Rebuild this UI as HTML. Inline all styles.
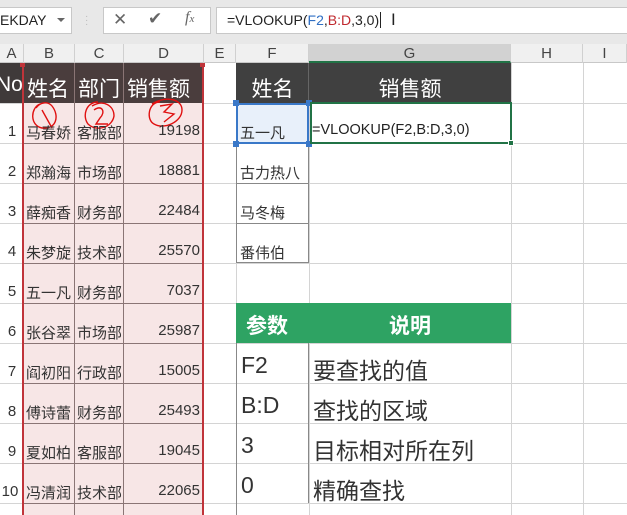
<!DOCTYPE html>
<html><head><meta charset="utf-8"><style>
*{margin:0;padding:0;box-sizing:border-box}
body{width:627px;height:515px;overflow:hidden;background:#fff;position:relative;font-family:"Liberation Sans","Noto Sans CJK SC",sans-serif;color:#333}
.a{position:absolute}
.hl{position:absolute;height:1px;background:#d4d4d4}
.vl{position:absolute;width:1px;background:#d4d4d4}
.ch{position:absolute;top:44px;height:19px;font-size:15px;color:#444;text-align:center;line-height:19px;border-right:1px solid #d0d0d0}
.t{position:absolute;font-size:15px;white-space:nowrap;color:#333}
</style></head><body>
<div class="a" style="left:0;top:0;width:627px;height:44px;background:#e8e8e8"></div>
<div class="a" style="left:0;top:7px;width:72px;height:27px;background:#fff;border:1px solid #c8c8c8;border-left:none;font-size:14px;line-height:25px;color:#222">EKDAY</div>
<div class="a" style="left:57px;top:18px;width:0;height:0;border-left:4px solid transparent;border-right:4px solid transparent;border-top:4px solid #666"></div>
<div class="a" style="left:85px;top:15px;color:#bbb;font-size:10px;line-height:4px">·<br>·<br>·</div>
<div class="a" style="left:103px;top:7px;width:108px;height:27px;background:#fff;border:1px solid #c8c8c8"></div>
<div class="a" style="left:113px;top:10px;font-size:17px;color:#666">✕</div>
<div class="a" style="left:148px;top:9px;font-size:17px;color:#666">✔</div>
<div class="a" style="left:185px;top:9px;font-size:16px;color:#666;font-style:italic;font-family:'Liberation Serif',serif">f<span style="font-size:11px">x</span></div>
<div class="a" style="left:216px;top:7px;width:411px;height:27px;background:#fff;border:1px solid #c8c8c8;border-right:none"></div>
<div class="a" style="left:227px;top:12px;font-size:14px;color:#222">=VLOOKUP(<span style="color:#2f6fc4">F2</span>,<span style="color:#c0292e">B:D</span>,3,0)<span style="display:inline-block;width:1px;height:16px;background:#222;vertical-align:-3px;margin-left:1px"></span></div>
<div class="a" style="left:391px;top:10px;font-size:17px;color:#222">I</div>
<div class="a" style="left:0;top:44px;width:627px;height:19px;background:#f0f0f0;border-bottom:1px solid #c8c8c8"></div>
<div class="ch" style="left:0;width:24px">A</div>
<div class="ch" style="left:24px;width:51px">B</div>
<div class="ch" style="left:75px;width:49px">C</div>
<div class="ch" style="left:124px;width:80px">D</div>
<div class="ch" style="left:204px;width:32px">E</div>
<div class="ch" style="left:236px;width:73px">F</div>
<div class="ch" style="left:309px;width:202px;background:#d2d2d2;border-bottom:2px solid #217346">G</div>
<div class="ch" style="left:511px;width:72px">H</div>
<div class="ch" style="left:583px;width:44px">I</div>
<div class="hl" style="left:0;top:143px;width:627px"></div>
<div class="hl" style="left:0;top:183px;width:627px"></div>
<div class="hl" style="left:0;top:223px;width:627px"></div>
<div class="hl" style="left:0;top:263px;width:627px"></div>
<div class="hl" style="left:0;top:303px;width:627px"></div>
<div class="hl" style="left:0;top:343px;width:627px"></div>
<div class="hl" style="left:0;top:383px;width:627px"></div>
<div class="hl" style="left:0;top:423px;width:627px"></div>
<div class="hl" style="left:0;top:463px;width:627px"></div>
<div class="hl" style="left:0;top:503px;width:627px"></div>
<div class="hl" style="left:0;top:103px;width:627px"></div>
<div class="vl" style="left:23px;top:63px;height:452px"></div>
<div class="vl" style="left:236px;top:63px;height:452px"></div>
<div class="vl" style="left:309px;top:63px;height:452px"></div>
<div class="vl" style="left:511px;top:63px;height:452px"></div>
<div class="vl" style="left:583px;top:63px;height:452px"></div>
<div class="a" style="left:0;top:63px;width:24px;height:40px;background:#3f3a3a"></div>
<div class="a" style="left:24px;top:63px;width:180px;height:40px;background:#4a3d3d"></div>
<div class="a" style="left:24px;top:103px;width:180px;height:412px;background:#f7e6e6"></div>
<div class="t" style="left:-4px;top:73px;font-size:21px;color:#fff">No</div>
<div class="t" style="left:27px;top:73px;font-size:21px;color:#fff">姓名</div>
<div class="t" style="left:78px;top:73px;font-size:21px;color:#fff">部门</div>
<div class="t" style="left:127px;top:73px;font-size:21px;color:#fff">销售额</div>
<div class="a" style="left:74px;top:63px;width:1px;height:452px;background:#8a7575"></div>
<div class="a" style="left:123px;top:63px;width:1px;height:452px;background:#8a7575"></div>
<div class="a" style="left:24px;top:143px;width:180px;height:1px;background:#8a7575"></div>
<div class="a" style="left:24px;top:183px;width:180px;height:1px;background:#8a7575"></div>
<div class="a" style="left:24px;top:223px;width:180px;height:1px;background:#8a7575"></div>
<div class="a" style="left:24px;top:263px;width:180px;height:1px;background:#8a7575"></div>
<div class="a" style="left:24px;top:303px;width:180px;height:1px;background:#8a7575"></div>
<div class="a" style="left:24px;top:343px;width:180px;height:1px;background:#8a7575"></div>
<div class="a" style="left:24px;top:383px;width:180px;height:1px;background:#8a7575"></div>
<div class="a" style="left:24px;top:423px;width:180px;height:1px;background:#8a7575"></div>
<div class="a" style="left:24px;top:463px;width:180px;height:1px;background:#8a7575"></div>
<div class="a" style="left:24px;top:503px;width:180px;height:1px;background:#8a7575"></div>
<div class="a" style="left:22px;top:64px;width:2px;height:451px;background:#c0343a"></div>
<div class="a" style="left:202px;top:64px;width:2px;height:451px;background:#c0343a"></div>
<div class="a" style="left:20px;top:63px;width:5px;height:4px;background:#c0343a"></div>
<div class="a" style="left:200px;top:63px;width:5px;height:4px;background:#c0343a"></div>
<svg class="a" style="left:0;top:0" width="627" height="515"><g fill="none" stroke="#e01010" stroke-width="1.4">
<path d="M40 104 C30 108 30 126 42 128 C56 130 60 116 52 106 C48 101 40 102 36 108 M42 110 L52 128"/>
<path d="M98 102 C86 102 82 116 88 124 C96 132 112 128 114 116 C114 106 104 99 92 106 M94 110 C102 104 106 112 100 118 L96 124 L108 124"/>
<path d="M160 102 C148 102 146 120 154 124 C164 130 182 122 182 110 C182 98 164 96 152 104 M160 106 L172 104 L164 112 L174 114 L164 122"/>
</g></svg>
<div class="t" style="left:0;top:123px;width:24px;text-align:center">1</div>
<div class="t" style="left:0;top:163px;width:24px;text-align:center">2</div>
<div class="t" style="left:0;top:203px;width:24px;text-align:center">3</div>
<div class="t" style="left:0;top:243px;width:24px;text-align:center">4</div>
<div class="t" style="left:0;top:283px;width:24px;text-align:center">5</div>
<div class="t" style="left:0;top:323px;width:24px;text-align:center">6</div>
<div class="t" style="left:0;top:363px;width:24px;text-align:center">7</div>
<div class="t" style="left:0;top:403px;width:24px;text-align:center">8</div>
<div class="t" style="left:0;top:443px;width:24px;text-align:center">9</div>
<div class="t" style="left:-2px;top:483px;width:24px;text-align:center">10</div>
<div class="t" style="left:26px;top:122px">马春娇</div><div class="t" style="left:77px;top:122px">客服部</div><div class="t" style="left:124px;top:122px;width:76px;text-align:right">19198</div>
<div class="t" style="left:26px;top:162px">郑瀚海</div><div class="t" style="left:77px;top:162px">市场部</div><div class="t" style="left:124px;top:162px;width:76px;text-align:right">18881</div>
<div class="t" style="left:26px;top:202px">薛痴香</div><div class="t" style="left:77px;top:202px">财务部</div><div class="t" style="left:124px;top:202px;width:76px;text-align:right">22484</div>
<div class="t" style="left:26px;top:242px">朱梦旋</div><div class="t" style="left:77px;top:242px">技术部</div><div class="t" style="left:124px;top:242px;width:76px;text-align:right">25570</div>
<div class="t" style="left:26px;top:282px">五一凡</div><div class="t" style="left:77px;top:282px">财务部</div><div class="t" style="left:124px;top:282px;width:76px;text-align:right">7037</div>
<div class="t" style="left:26px;top:322px">张谷翠</div><div class="t" style="left:77px;top:322px">市场部</div><div class="t" style="left:124px;top:322px;width:76px;text-align:right">25987</div>
<div class="t" style="left:26px;top:362px">阎初阳</div><div class="t" style="left:77px;top:362px">行政部</div><div class="t" style="left:124px;top:362px;width:76px;text-align:right">15005</div>
<div class="t" style="left:26px;top:402px">傅诗蕾</div><div class="t" style="left:77px;top:402px">财务部</div><div class="t" style="left:124px;top:402px;width:76px;text-align:right">25493</div>
<div class="t" style="left:26px;top:442px">夏如柏</div><div class="t" style="left:77px;top:442px">客服部</div><div class="t" style="left:124px;top:442px;width:76px;text-align:right">19045</div>
<div class="t" style="left:26px;top:482px">冯清润</div><div class="t" style="left:77px;top:482px">技术部</div><div class="t" style="left:124px;top:482px;width:76px;text-align:right">22065</div>
<div class="a" style="left:236px;top:63px;width:275px;height:40px;background:#404040"></div>
<div class="a" style="left:308px;top:63px;width:1px;height:40px;background:#666"></div>
<div class="t" style="left:236px;top:73px;width:73px;text-align:center;font-size:21px;color:#fff">姓名</div>
<div class="t" style="left:309px;top:73px;width:202px;text-align:center;font-size:21px;color:#fff">销售额</div>
<div class="a" style="left:236px;top:103px;width:73px;height:160px;border:1px solid #888;border-top:none"></div>
<div class="a" style="left:236px;top:143px;width:73px;height:1px;background:#888"></div>
<div class="a" style="left:236px;top:183px;width:73px;height:1px;background:#888"></div>
<div class="a" style="left:236px;top:223px;width:73px;height:1px;background:#888"></div>
<div class="a" style="left:236px;top:103px;width:73px;height:41px;background:#e8f0fa;border:2px solid #3a78c8"></div>
<div class="a" style="left:233px;top:100px;width:6px;height:6px;background:#3a78c8"></div>
<div class="a" style="left:306px;top:100px;width:6px;height:6px;background:#3a78c8"></div>
<div class="a" style="left:233px;top:141px;width:6px;height:6px;background:#3a78c8"></div>
<div class="a" style="left:306px;top:141px;width:6px;height:6px;background:#3a78c8"></div>
<div class="a" style="left:310px;top:102px;width:202px;height:42px;border:2px solid #217346"></div>
<div class="a" style="left:508px;top:140px;width:6px;height:6px;background:#217346;border:1px solid #fff"></div>
<div class="t" style="left:240px;top:122px">五一凡</div>
<div class="t" style="left:312px;top:122px;color:#222;font-size:14.5px">=VLOOKUP(F2,B:D,3,0)</div>
<div class="t" style="left:240px;top:162px">古力热八</div>
<div class="t" style="left:240px;top:202px">马冬梅</div>
<div class="t" style="left:240px;top:242px">番伟伯</div>
<div class="a" style="left:236px;top:303px;width:275px;height:40px;background:#2ea363"></div>
<div class="t" style="left:246px;top:310px;font-size:21px;font-weight:bold;color:#fff">参数</div>
<div class="t" style="left:309px;top:310px;width:202px;text-align:center;font-size:21px;font-weight:bold;color:#fff">说明</div>
<div class="a" style="left:236px;top:343px;width:1px;height:172px;background:#888"></div>
<div class="a" style="left:308px;top:343px;width:1px;height:160px;background:#888"></div>
<div class="t" style="left:241px;top:352px;font-size:23px">F2</div><div class="t" style="left:313px;top:352px;font-size:23px">要查找的值</div>
<div class="t" style="left:241px;top:392px;font-size:23px">B:D</div><div class="t" style="left:313px;top:392px;font-size:23px">查找的区域</div>
<div class="t" style="left:241px;top:432px;font-size:23px">3</div><div class="t" style="left:313px;top:432px;font-size:23px">目标相对所在列</div>
<div class="t" style="left:241px;top:472px;font-size:23px">0</div><div class="t" style="left:313px;top:472px;font-size:23px">精确查找</div>
</body></html>
